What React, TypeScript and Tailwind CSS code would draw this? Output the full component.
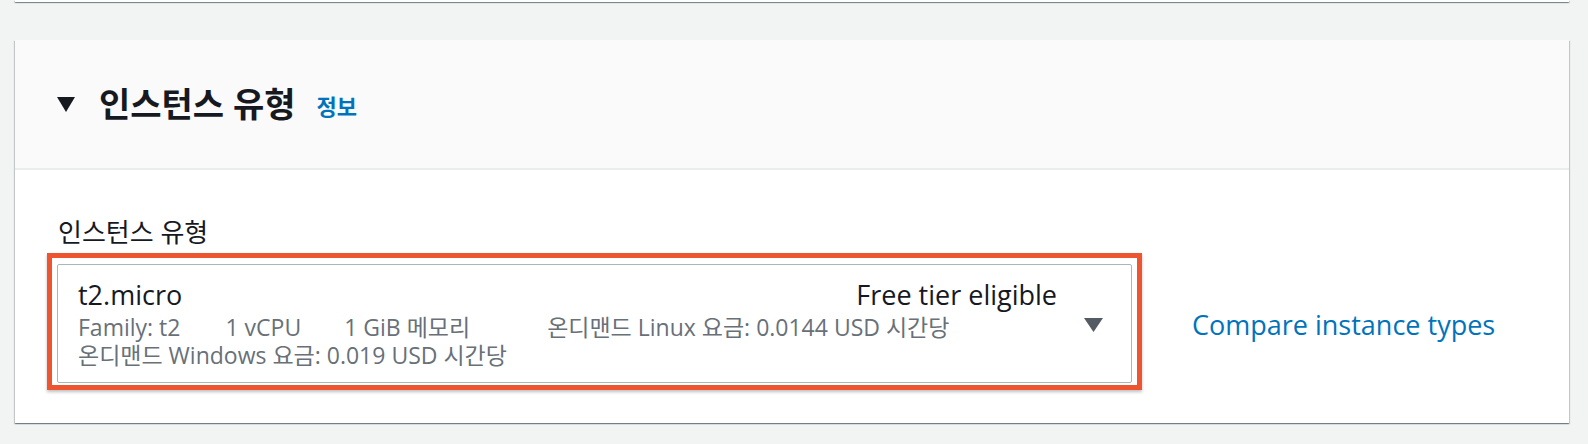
export default function App() {
  const font = { fontFamily: '"Open Sans", "Noto Sans CJK KR", sans-serif' };
  return (
    <div className="min-h-screen bg-[#f2f3f3] pl-[15px] pr-[19px] text-[#16191f]" style={font}>
      {/* bottom edge of the card above */}
      <div className="h-[2px] bg-white shadow-[0_1px_1px_rgba(0,28,36,0.35),1px_1px_1px_rgba(0,28,36,0.15),-1px_1px_1px_rgba(0,28,36,0.15)]" />

      <section className="mt-[38px] bg-white shadow-[0_1px_1px_rgba(0,28,36,0.35),1px_1px_1px_rgba(0,28,36,0.15),-1px_1px_1px_rgba(0,28,36,0.15)]">
        <header className="flex h-[130px] items-center border-b-2 border-[#eaeded] bg-[#fafafa] pl-[42px]">
          <svg width="18" height="15" viewBox="0 0 18 15" className="fill-[#16191f]">
            <path d="M0 0h18L9 15z" />
          </svg>
          <h2 className="ml-[24px] text-[34px] leading-none font-bold">인스턴스 유형</h2>
          <a className="ml-[21px] mt-[4px] text-[22px] font-bold text-[#0073bb]">정보</a>
        </header>

        <div className="pt-[48px] pb-[33px] pl-[32px]">
          <div className="ml-[11px] text-[26px] leading-[28px]">인스턴스 유형</div>
          <div className="mt-[7px] flex items-center">
            <div className="w-[1095px] border-[5px] border-[#ec5530] px-[5px] pt-[6px] pb-[2px] shadow-[0_2px_3px_rgba(0,0,0,0.25)]">
              <div className="flex items-center rounded-[2px] border-[1.5px] border-[#aab7b8] pt-[15px] pr-[28px] pb-[13px] pl-[20px]">
                <div className="flex-1">
                  <div className="flex justify-between text-[27px] leading-[30px]">
                    <span>t2.micro</span>
                    <span>Free tier eligible</span>
                  </div>
                  <div className="mt-[3px] flex text-[23px] leading-[28px] text-[#687078]">
                    <span>Family: t2</span>
                    <span className="ml-[45px]">1 vCPU</span>
                    <span className="ml-[43px]">1 GiB 메모리</span>
                    <span className="ml-[77px]">온디맨드 Linux 요금: 0.0144 USD 시간당</span>
                  </div>
                  <div className="text-[23px] leading-[28px] text-[#687078]">온디맨드 Windows 요금: 0.019 USD 시간당</div>
                </div>
                <svg width="19" height="14" viewBox="0 0 19 14" className="ml-[27px] fill-[#545b64]">
                  <path d="M0 0h19L9.5 14z" />
                </svg>
              </div>
            </div>
            <a className="ml-[50px] mt-[8px] text-[27px] text-[#0073bb]">Compare instance types</a>
          </div>
        </div>
      </section>
    </div>
  );
}
